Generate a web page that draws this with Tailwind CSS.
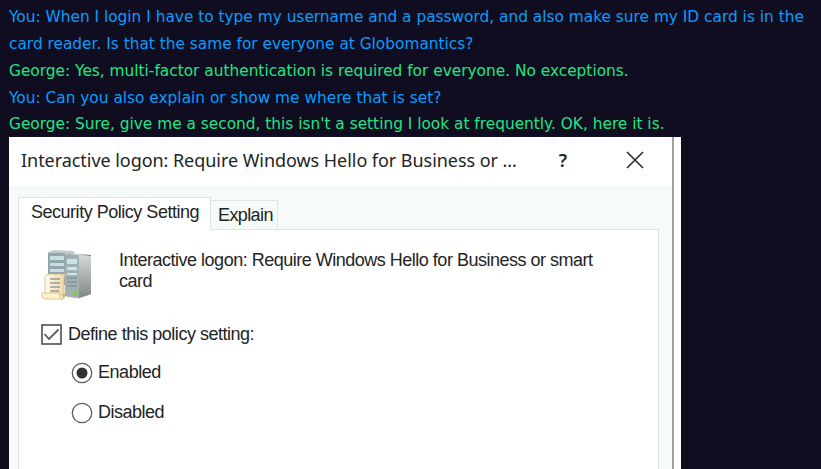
<!DOCTYPE html>
<html lang="en">
<head>
<meta charset="utf-8">
<title>Globomantics chat</title>
<script src="https://cdn.jsdelivr.net/npm/@tailwindcss/browser@4"></script>
</head>
<body class="h-[469px] overflow-hidden bg-[#100d20] pl-[9px] pt-[3.9px] font-['DejaVu_Sans',sans-serif] text-[15.36px] leading-[26.88px]">
<div class="h-[133.1px] whitespace-nowrap">
<p class="text-[#069dff]"><span>You: When I login I have to type my username and a password, and also make sure my ID card is in the</span><br><span>card reader. Is that the same for everyone at Globomantics?</span></p>
<p class="text-[#20e584]"><span>George: Yes, multi-factor authentication is required for everyone. No exceptions.</span></p>
<p class="text-[#069dff]"><span>You: Can you also explain or show me where that is set?</span></p>
<p class="text-[#20e584]"><span>George: Sure, give me a second, this isn't a setting I look at frequently. OK, here it is.</span></p>
</div>
<div class="flex h-[332px] w-[672px] bg-white whitespace-nowrap text-[#222423]">
<div class="flex h-full w-[665px] flex-col border-r-2 border-[#9da19f] bg-[#f6faf8]">
<header class="flex h-[49px] shrink-0 items-center bg-white pl-3 pb-[3px] font-['Noto_Sans',sans-serif] text-[18px] leading-6">
<h1 class="w-[534px] tracking-[-0.05px]"><span>Interactive logon: Require Windows Hello for Business or ...</span></h1>
<button class="w-4 text-center font-semibold">?</button>
<svg class="ml-[55px] size-[18px]" viewBox="0 0 18 18" fill="none" stroke="#303332" stroke-width="1.7"><path d="M1 1 17 17M17 1 1 17"/></svg>
</header>
<div class="flex flex-1 flex-col pl-[9px] pr-[13px] pt-[11px] font-['Liberation_Sans',sans-serif] text-[18px] leading-[21px]">
<nav class="z-10 flex h-8 shrink-0 items-end">
<div class="h-[33px] -mb-px w-[193px] shrink-0 border border-b-0 border-[#e0e5e2] bg-white pl-3 pt-1 tracking-[-0.48px]"><span>Security Policy Setting</span></div>
<div class="h-[29px] w-[67px] border-t border-r border-[#e0e5e2] pl-[7px] pt-1 tracking-[-0.6px]"><span>Explain</span></div>
</nav>
<main class="flex-1 border border-b-0 border-[#e0e5e2] bg-white pl-[22px]">
<div class="flex pt-5">
<svg class="size-[52px]" viewBox="0 0 52 52">
<defs><linearGradient id="g"><stop stop-color="#8b9a9e"/><stop offset=".5" stop-color="#dce3e4"/><stop offset="1" stop-color="#68767a"/></linearGradient><linearGradient id="s" x2="0" y2="1"><stop stop-color="#d3d9d7"/><stop offset="1" stop-color="#7f8987"/></linearGradient><linearGradient id="p"><stop stop-color="#fffbe8"/><stop offset="1" stop-color="#ead6a0"/></linearGradient></defs>
<path d="M7 2 13 0 33 1v32H7z" fill="#c3cbcb"/><path d="M7 3h17v32H7z" fill="#95a5a9"/><path d="M9 6h14v4H9zM9 13h14v3H9zM9 19h14v3H9z" fill="#c4e1e7"/>
<path d="m24 5 7-2 19 2v39l-13 5-13-3z" fill="url(#g)"/><path d="M24 5h14v43l-14-2z" fill="#a3b0b2"/><path d="m38 5 12 1v38l-12 4z" fill="url(#s)"/>
<path d="M26 9h10v5H26zM26 17h10v3H26zM26 23h10v2H26z" fill="#c5e5ea"/><path d="M26 28h10M26 32h10M26 36h10" stroke="#75868a"/><circle cx="34" cy="43" r="2" fill="#67db2d"/>
<path d="M4 27q1-3 4-3h17q-2 2-2 5v17H4z" fill="url(#p)" stroke="#c5b181" stroke-width=".7"/><path d="M9 29h10M9 33h10M9 37h10M9 41h9" stroke="#6d718a" stroke-width="1.2"/><path d="M1 43h18q-1 6 3 6H4q-4-1-3-6z" fill="#fff1c7" stroke="#c5b181" stroke-width=".7"/><path d="M22 49q3-2 2-5h-3" fill="#d2b96f"/>
</svg>
<p class="ml-[26px] tracking-[-0.495px]"><span>Interactive logon: Require Windows Hello for Business or smart</span><br><span>card</span></p>
</div>
<div class="mt-[22px] flex h-[21px] items-center"><svg class="size-[21px]" viewBox="0 0 21 21" fill="none"><path d="M1 1h19v19H1z" stroke="#414543" stroke-width="1.5"/><path d="m3.5 10 4.5 5 9.5-9.5" stroke="#5b605d" stroke-width="1.8"/></svg><label class="ml-[6px] tracking-[-0.48px]"><span>Define this policy setting:</span></label></div>
<div class="ml-[30px] mt-[17px] flex h-[22px] items-center"><svg class="size-[22px]" viewBox="0 0 22 22"><circle cx="11" cy="11" r="9.7" fill="white" stroke="#5a5f5c" stroke-width="1.3"/><circle cx="11" cy="11" r="5.5" fill="#303231"/></svg><label class="ml-[5px] tracking-[-0.45px]"><span>Enabled</span></label></div>
<div class="ml-[30px] mt-[18px] flex h-[22px] items-center"><svg class="size-[22px]" viewBox="0 0 22 22"><circle cx="11" cy="11" r="9.7" fill="white" stroke="#5a5f5c" stroke-width="1.3"/></svg><label class="ml-[5px] tracking-[-0.5px]"><span>Disabled</span></label></div>
</main>
</div>
</div>
</div>
</body>
</html>
